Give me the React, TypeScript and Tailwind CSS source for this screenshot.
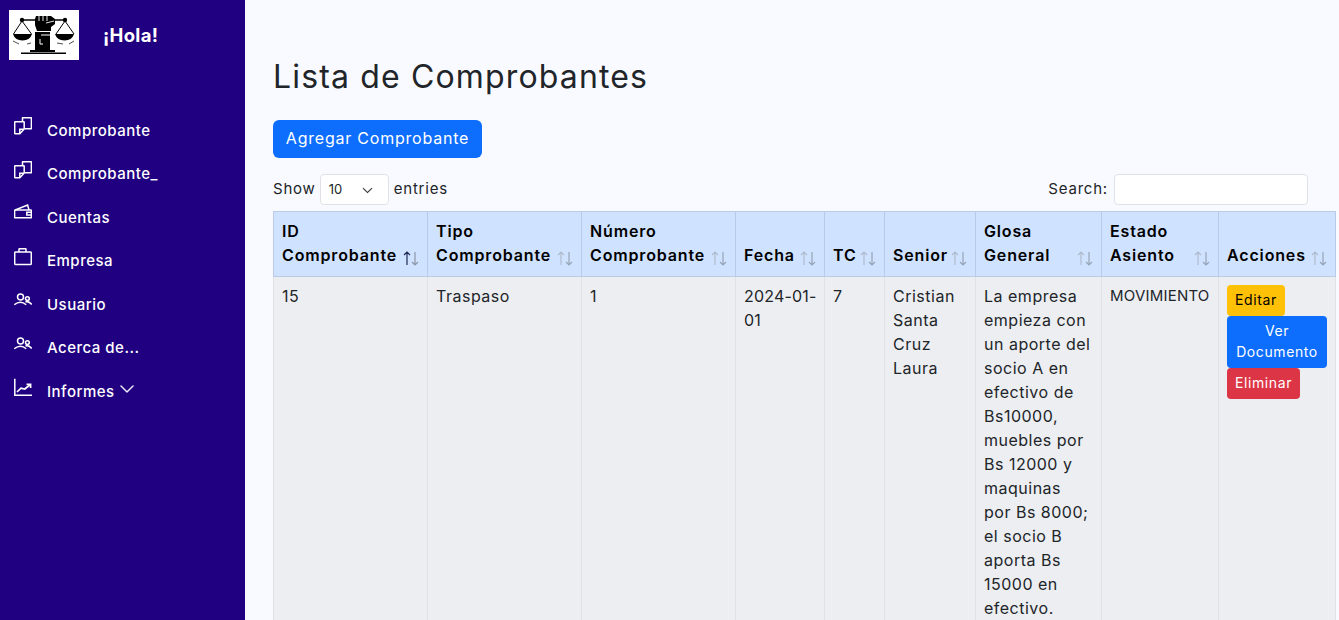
import React from 'react';
import { BsChevronDown } from 'react-icons/bs';

const IconBox = ({ children }: { children: React.ReactNode }) => (
  <svg viewBox="0 0 18 18" fill="none" stroke="currentColor" strokeWidth="1.500" className="w-[18px] h-[18px] -mt-[7px] mr-[15px] shrink-0">
    {children}
  </svg>
);

const DocsIcon = () => (
  <IconBox>
    <path d="M8.500 4 V1 Q8.500 0.700 9 0.700 H17 Q17.400 0.700 17.400 1 V11.200 Q17.400 11.700 17 11.700 H10.800" />
    <path d="M1.200 4.800 H9.700 Q10.200 4.800 10.200 5.300 V12 L5.800 16.700 H1.200 Q0.700 16.700 0.700 16.200 V5.300 Q0.700 4.800 1.200 4.800 Z" />
    <path d="M5.800 16.500 V12.200 H10" />
  </IconBox>
);

const WalletIcon = () => (
  <IconBox>
    <path d="M1.200 6 H16.800 Q17.400 6 17.400 6.600 V13.200 Q17.400 13.800 16.800 13.800 H1.200 Q0.600 13.800 0.600 13.200 V6.600 Q0.600 6 1.200 6 Z" />
    <path d="M1.200 6 L13.600 1 L15 6" />
    <path d="M17.400 8.200 H12.800 V11 H17.400" />
  </IconBox>
);

const CaseIcon = () => (
  <IconBox>
    <rect x="0.700" y="4" width="16.600" height="12.500" rx="1" />
    <path d="M5 4 V1.200 Q5 0.700 5.500 0.700 H11.500 Q12 0.700 12 1.200 V4" />
  </IconBox>
);

const PeopleIcon = () => (
  <IconBox>
    <circle cx="6.500" cy="6" r="3" />
    <circle cx="13.400" cy="7.600" r="1.900" />
    <path d="M0.300 13.800 Q6.500 8.600 12.200 13.800" />
    <path d="M11.500 11 Q14.500 9.600 17.800 13.400" />
  </IconBox>
);

const ChartIcon = () => (
  <IconBox>
    <path d="M0.800 0.800 V17.300 H18" />
    <path d="M3 14 L7 10.200 L10.800 11 L15.800 7" strokeWidth="1.700" />
    <path d="M12.500 6.300 H16.600 V10" strokeWidth="1.700" />
  </IconBox>
);

const menu = [
  { label: 'Comprobante', icon: DocsIcon },
  { label: 'Comprobante_', icon: DocsIcon },
  { label: 'Cuentas', icon: WalletIcon },
  { label: 'Empresa', icon: CaseIcon },
  { label: 'Usuario', icon: PeopleIcon },
  { label: 'Acerca de...', icon: PeopleIcon },
  { label: 'Informes', icon: ChartIcon, caret: true },
];

const columns = [
  { title: ['ID', 'Comprobante'], width: 'w-[154px]', active: true },
  { title: ['Tipo', 'Comprobante'], width: 'w-[154px]' },
  { title: ['Número', 'Comprobante'], width: 'w-[154px]' },
  { title: ['Fecha'], width: 'w-[89px]' },
  { title: ['TC'], width: 'w-[60px]' },
  { title: ['Senior'], width: 'w-[91px]' },
  { title: ['Glosa', 'General'], width: 'w-[126px]' },
  { title: ['Estado', 'Asiento'], width: 'w-[117px]' },
  { title: ['Acciones'], width: 'w-[117px]' },
];

const glosa = [
  'La empresa',
  'empieza con',
  'un aporte del',
  'socio A en',
  'efectivo de',
  'Bs10000,',
  'muebles por',
  'Bs 12000 y',
  'maquinas',
  'por Bs 8000;',
  'el socio B',
  'aporta Bs',
  '15000 en',
  'efectivo.',
];

const Logo = () => (
  <div className="w-[70px] h-[50px] bg-white shrink-0">
    <svg viewBox="0 0 70 50" className="w-full h-full">
      <path d="M13 10 H57" stroke="#000" strokeWidth="1.600" />
      <circle cx="13" cy="10" r="2.200" fill="#000" />
      <circle cx="56" cy="10" r="2.200" fill="#000" />
      <path d="M13 11 L4.500 24 M13 11 L22.500 24 M56 11 L47 24 M56 11 L65 24" stroke="#000" strokeWidth="1" fill="none" />
      <path d="M4 24 H23 Q21 30.500 13.500 30.500 Q6 30.500 4 24 Z M46 24 H65 Q63 30.500 55.500 30.500 Q48 30.500 46 24 Z" fill="#000" />
      <path d="M4 31 L10 34 M18 34 L22 33 M48 33 L54 34 M60 34 L65 31" stroke="#000" strokeWidth="0.700" />
      <path d="M26 9 L27 6 H42 L46 9 V14 L42 17 V21 H28 L26 15 Z" fill="#000" />
      <path d="M30 6 V11 M34 6 V11 M38 6 V11 M37 13 L45 11" stroke="#fff" strokeWidth="0.900" />
      <path d="M26 22 H41 V40 H26 Z" fill="#000" />
      <path d="M31 29 V34 H34 M32 25 H41" stroke="#fff" strokeWidth="1" fill="none" />
      <path d="M21 40 H46 V42 H21 Z" fill="#000" />
      <path d="M12 42.500 H57 V44 H12 Z" fill="#000" />
    </svg>
  </div>
);

const SortArrows = ({ active }: { active?: boolean }) => (
  <svg viewBox="0 0 18 16" className="absolute right-[7px] bottom-[10px] w-[18px] h-[16px]">
    <path d="M5 15 V2 M2 5 L5 2 L8 5" stroke={active ? '#1f2a55' : '#b0bccd'} strokeWidth="1.200" fill="none" />
    <path d="M13 2 V15 M10 12 L13 15 L16 12" stroke={active ? '#8d97a7' : '#97a4b6'} strokeWidth="1.200" fill="none" />
  </svg>
);

const App = () => {
  return (
    <div className="flex h-screen overflow-hidden bg-[#f9faff] font-['Inter','Liberation_Sans',sans-serif] text-[#212529]">
      <aside className="w-[245px] shrink-0 bg-[#200080] text-white pl-[9px] pt-[10px]">
        <div className="flex items-center gap-[24px]">
          <Logo />
          <span className="text-[18.5px] font-bold tracking-[0.3px] mt-[1px]">¡Hola!</span>
        </div>
        <nav className="mt-[48px] pl-[5px]">
          {menu.map((item) => (
            <div key={item.label} className="flex items-center h-[43.5px]">
              <item.icon />
              <span className="text-[15px] font-[450] tracking-[0.5px] mt-[2px]">{item.label}</span>
              {item.caret && <BsChevronDown className="w-[16px] h-[16px] ml-[4px] -mt-[4px] stroke-[0.5px]" />}
            </div>
          ))}
        </nav>
      </aside>

      <main className="flex-1 min-w-0 pl-[28px] pt-[56px]">
        <h1 className="text-[32px] leading-[42px] font-normal tracking-[1.15px]">Lista de Comprobantes</h1>
        <button className="mt-[22px] h-[38px] w-[209px] pb-[2px] bg-[#0d6efd] text-white rounded-md text-[16px] tracking-[0.78px]">
          Agregar Comprobante
        </button>
        <div className="flex items-center justify-between w-[1035px] mt-[16px] h-[31px] text-[15px] tracking-[0.8px]">
          <div className="flex items-center">
            <span>Show</span>
            <div className="relative ml-[4px] mr-[5px] w-[69px] h-[31px] bg-white border border-[#dee2e6] rounded flex items-center pl-[8px] text-[13px] tracking-normal">
              10
              <BsChevronDown className="absolute right-[15px] top-[10px] w-[11px] h-[11px] stroke-[0.6px]" />
            </div>
            <span>entries</span>
          </div>
          <div className="flex items-center">
            <span>Search:</span>
            <input className="ml-[6px] w-[194px] h-[31px] bg-white border border-[#dee2e6] rounded" />
          </div>
        </div>
        <table className="mt-[6px] w-[1062px] table-fixed border-collapse text-[16px] leading-[24px]">
          <thead>
            <tr className="bg-[#cfe2ff] text-black">
              {columns.map((col) => (
                <th key={col.title.join(' ')} className={`${col.width} relative border border-[#bacbe6] pl-[8px] pr-0 pt-[7px] pb-[9px] text-left align-bottom font-semibold tracking-[0.85px]`}>
                  {col.title.map((line) => (
                    <div key={line}>{line}</div>
                  ))}
                  <SortArrows active={col.active} />
                </th>
              ))}
            </tr>
          </thead>
          <tbody>
            <tr className="bg-[#eceef1] align-top tracking-[0.5px]">
              <td className="border border-[#dee2e6] px-[8px] pt-[7px] pb-[9px]">15</td>
              <td className="border border-[#dee2e6] px-[8px] pt-[7px] pb-[9px]">Traspaso</td>
              <td className="border border-[#dee2e6] px-[8px] pt-[7px] pb-[9px]">1</td>
              <td className="border border-[#dee2e6] px-[8px] pt-[7px] pb-[9px] whitespace-nowrap tracking-[0.2px]">
                2024-01-
                <br />
                01
              </td>
              <td className="border border-[#dee2e6] px-[8px] pt-[7px] pb-[9px]">7</td>
              <td className="border border-[#dee2e6] px-[8px] pt-[7px] pb-[9px]">Cristian Santa Cruz Laura</td>
              <td className="border border-[#dee2e6] px-[8px] pt-[7px] pb-[9px]">
                {glosa.map((line) => (
                  <div key={line} className="whitespace-nowrap">{line}</div>
                ))}
              </td>
              <td className="border border-[#dee2e6] px-[8px] pt-[7px] pb-[9px] whitespace-nowrap text-[15px] tracking-[0.2px]">MOVIMIENTO</td>
              <td className="border border-[#dee2e6] p-[8px] text-[14px] leading-[21px] tracking-[0.6px]">
                <button className="block h-[31px] px-[8px] pb-[2px] bg-[#ffc107] text-black rounded">Editar</button>
                <button className="block w-[100px] h-[52px] px-[6px] pb-[2px] bg-[#0d6efd] text-white rounded">Ver Documento</button>
                <button className="block h-[31px] px-[8px] pb-[2px] bg-[#dc3545] text-white rounded">Eliminar</button>
              </td>
            </tr>
          </tbody>
        </table>
      </main>
    </div>
  );
};

export default App;
